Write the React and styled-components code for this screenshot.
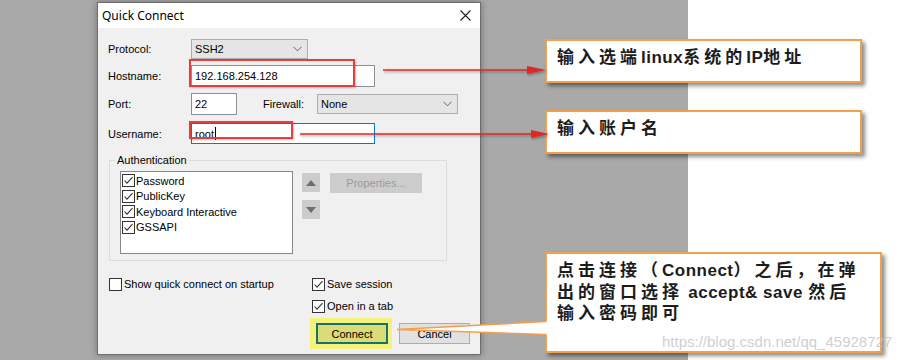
import React from "react";
import styled, { createGlobalStyle } from "styled-components";

const GlobalStyle = createGlobalStyle`
  html, body {
    margin: 0;
    padding: 0;
  }
  body {
    width: 915px;
    height: 360px;
    overflow: hidden;
    background: #fff;
  }
`;

const uiFont = `"Liberation Sans", "Noto Sans", sans-serif`;
const noteFont = `"Liberation Sans", "Noto Sans CJK SC", sans-serif`;

const Page = styled.div`
  position: relative;
  display: flex;
  width: 915px;
  height: 360px;
  overflow: hidden;
`;

const Backdrop = styled.div`
  width: 688px;
  height: 100%;
  box-sizing: border-box;
  padding: 2px 0 0 97px;
  background: #a9a9a9;
`;

const Blank = styled.div`
  flex: 1;
  background: #fff;
`;

const Dialog = styled.div`
  width: 384px;
  height: 353px;
  box-sizing: border-box;
  border: 1px solid #6e6e6e;
  background: #f0f0f0;
  box-shadow: 0 0 7px rgba(0, 0, 0, 0.35);
  font-family: ${uiFont};
  font-size: 11px;
  color: #000;
  display: flex;
  flex-direction: column;
`;

const TitleBar = styled.div`
  height: 25px;
  flex-shrink: 0;
  background: #fff;
  display: flex;
  align-items: center;
  justify-content: space-between;
  padding-left: 4px;
  font-family: "Noto Sans", sans-serif;
  font-size: 12px;
`;

const CloseButton = styled.div`
  width: 30px;
  height: 25px;
  display: flex;
  align-items: center;
  justify-content: center;
`;

const Body = styled.div`
  padding: 11px 0 0 10px;
  display: flex;
  flex-direction: column;
`;

const FormRow = styled.div`
  display: flex;
  align-items: center;
  height: ${(p) => p.$h}px;
  margin-top: ${(p) => p.$gap || 0}px;
`;

const FieldLabel = styled.span`
  width: ${(p) => p.$w || 83}px;
  margin-left: ${(p) => p.$ml || 0}px;
  flex-shrink: 0;
`;

const TextInput = styled.div`
  width: ${(p) => p.$w}px;
  height: 100%;
  box-sizing: border-box;
  border: 1px solid ${(p) => (p.$focused ? "#0078d7" : "#8f8f8f")};
  background: #fff;
  display: flex;
  align-items: center;
  padding-left: 3px;
`;

const Caret = styled.span`
  display: inline-block;
  width: 1px;
  height: 13px;
  background: #000;
  margin-left: 1px;
`;

const Select = styled.div`
  width: ${(p) => p.$w}px;
  height: 20px;
  box-sizing: border-box;
  border: 1px solid #adadad;
  background: #e5e5e5;
  display: flex;
  align-items: center;
  justify-content: space-between;
  padding: 0 5px 0 3px;
`;

const Group = styled.fieldset`
  margin: 9px 0 0 1px;
  width: 338px;
  box-sizing: border-box;
  border: 1px solid #dcdcdc;
  padding: 4px 0 6px 0;
  min-width: 0;
  display: flex;
  align-items: flex-start;
`;

const GroupTitle = styled.legend`
  padding: 0 2px;
  margin-left: 5px;
  line-height: 14px;
`;

const MethodList = styled.div`
  margin-left: 10px;
  width: 173px;
  height: 83px;
  box-sizing: border-box;
  border: 1px solid #828790;
  background: #fff;
  padding: 1px 0 0 1px;
`;

const CheckRow = styled.div`
  display: flex;
  align-items: center;
  gap: ${(p) => p.$gap || 2}px;
  height: ${(p) => p.$h || 14}px;
  margin-top: ${(p) => p.$mt || 0}px;
  padding-left: ${(p) => p.$pl || 0}px;
  white-space: nowrap;
`;

const OrderButtons = styled.div`
  margin-left: 9px;
  margin-top: 2px;
  display: flex;
  flex-direction: column;
  gap: 8px;
`;

const OrderButton = styled.div`
  width: 18px;
  height: 19px;
  background: #cccccc;
  display: flex;
  align-items: center;
  justify-content: center;
`;

const PropertiesButton = styled.div`
  margin: 2px 0 0 10px;
  width: 92px;
  height: 20px;
  background: #cccccc;
  color: #9a9a9a;
  display: flex;
  align-items: center;
  justify-content: center;
`;

const BottomArea = styled.div`
  display: flex;
  margin: 16px 0 0 1px;
`;

const LeftColumn = styled.div`
  width: 201px;
`;

const RightColumn = styled.div`
  display: flex;
  flex-direction: column;
`;

const ButtonRow = styled.div`
  display: flex;
  align-items: center;
  margin-top: 5px;
`;

const Highlight = styled.div`
  padding: 5px 4px 5px 6px;
  background: #f2f27c;
`;

const DialogButton = styled.div`
  width: ${(p) => p.$w}px;
  height: 21px;
  box-sizing: border-box;
  margin-left: ${(p) => p.$ml || 0}px;
  display: flex;
  align-items: center;
  justify-content: center;
  border: ${(p) => (p.$primary ? "2px solid #16706c" : "1px solid #adadad")};
  background: ${(p) => (p.$primary ? "#dcdc76" : "#e1e1e1")};
`;

const RedMark = styled.div`
  position: absolute;
  left: ${(p) => p.$x}px;
  top: ${(p) => p.$y}px;
  width: ${(p) => p.$w}px;
  height: ${(p) => p.$h}px;
  box-sizing: border-box;
  border: 2px solid #e2403f;
  box-shadow: 1px 1px 2px rgba(0, 0, 0, 0.25);
`;

const Callout = styled.div`
  position: absolute;
  left: ${(p) => p.$x}px;
  top: ${(p) => p.$y}px;
  width: ${(p) => p.$w}px;
  height: ${(p) => p.$h}px;
  box-sizing: border-box;
  border: 2px solid #f3a04a;
  background: #fff;
  box-shadow: 3px 3px 4px rgba(0, 0, 0, 0.45);
  padding: 6px 0 0 10px;
  font-family: ${noteFont};
  font-size: 17px;
  font-weight: 700;
  line-height: 21.5px;
  letter-spacing: 4px;
  color: #1c1c1c;
`;

const Latin = styled.span`
  letter-spacing: 0.5px;
`;

const Overlay = styled.svg`
  position: absolute;
  left: 0;
  top: 0;
  pointer-events: none;
`;

const Watermark = styled.div`
  position: absolute;
  left: 662px;
  top: 333px;
  font-family: "Liberation Sans", sans-serif;
  font-size: 15px;
  color: rgba(190, 190, 190, 0.75);
  white-space: nowrap;
`;

function CheckBox({ checked }) {
  return (
    <svg width="13" height="13" viewBox="0 0 13 13">
      <rect x="0.5" y="0.5" width="12" height="12" fill="#fff" stroke="#333" />
      {checked && (
        <polyline
          points="2.5,6.5 5,9.2 10.5,3.2"
          fill="none"
          stroke="#333"
          strokeWidth="1.1"
        />
      )}
    </svg>
  );
}

function Chevron() {
  return (
    <svg width="9" height="6" viewBox="0 0 9 6">
      <polyline points="0.5,0.8 4.5,4.8 8.5,0.8" fill="none" stroke="#555" strokeWidth="0.9" />
    </svg>
  );
}

const methods = ["Password", "PublicKey", "Keyboard Interactive", "GSSAPI"];

export default function App() {
  return (
    <>
      <GlobalStyle />
      <Page>
        <Backdrop>
          <Dialog>
            <TitleBar>
              <span>Quick Connect</span>
              <CloseButton>
                <svg width="11" height="11" viewBox="0 0 11 11">
                  <path d="M0.5 0.5 L10.5 10.5 M10.5 0.5 L0.5 10.5" stroke="#222" strokeWidth="1.1" />
                </svg>
              </CloseButton>
            </TitleBar>
            <Body>
              <FormRow $h={20}>
                <FieldLabel>Protocol:</FieldLabel>
                <Select $w={117}>
                  <span>SSH2</span>
                  <Chevron />
                </Select>
              </FormRow>
              <FormRow $h={22} $gap={6}>
                <FieldLabel>Hostname:</FieldLabel>
                <TextInput $w={184}>192.168.254.128</TextInput>
              </FormRow>
              <FormRow $h={22} $gap={6}>
                <FieldLabel>Port:</FieldLabel>
                <TextInput $w={46}>22</TextInput>
                <FieldLabel $w={54} $ml={26}>Firewall:</FieldLabel>
                <Select $w={141}>
                  <span>None</span>
                  <Chevron />
                </Select>
              </FormRow>
              <FormRow $h={21} $gap={8}>
                <FieldLabel>Username:</FieldLabel>
                <TextInput $w={184} $focused>
                  root
                  <Caret />
                </TextInput>
              </FormRow>

              <Group>
                <GroupTitle>Authentication</GroupTitle>
                <MethodList>
                  {methods.map((m) => (
                    <CheckRow key={m} $h={15.5} $gap={1}>
                      <CheckBox checked />
                      <span>{m}</span>
                    </CheckRow>
                  ))}
                </MethodList>
                <OrderButtons>
                  <OrderButton>
                    <svg width="10" height="6" viewBox="0 0 10 6">
                      <polygon points="5,0 10,6 0,6" fill="#6e6e6e" />
                    </svg>
                  </OrderButton>
                  <OrderButton>
                    <svg width="10" height="6" viewBox="0 0 10 6">
                      <polygon points="0,0 10,0 5,6" fill="#6e6e6e" />
                    </svg>
                  </OrderButton>
                </OrderButtons>
                <PropertiesButton>Properties...</PropertiesButton>
              </Group>

              <BottomArea>
                <LeftColumn>
                  <CheckRow>
                    <CheckBox />
                    <span>Show quick connect on startup</span>
                  </CheckRow>
                </LeftColumn>
                <RightColumn>
                  <CheckRow $pl={2}>
                    <CheckBox checked />
                    <span>Save session</span>
                  </CheckRow>
                  <CheckRow $pl={2} $mt={8}>
                    <CheckBox checked />
                    <span>Open in a tab</span>
                  </CheckRow>
                  <ButtonRow>
                    <Highlight>
                      <DialogButton $w={72} $primary>
                        Connect
                      </DialogButton>
                    </Highlight>
                    <DialogButton $w={71} $ml={7}>
                      Cancel
                    </DialogButton>
                  </ButtonRow>
                </RightColumn>
              </BottomArea>
            </Body>
          </Dialog>
        </Backdrop>
        <Blank />

        <RedMark $x={189} $y={59} $w={166} $h={28} />
        <RedMark $x={189} $y={121} $w={104} $h={18} />

        <Callout $x={545} $y={39} $w={317} $h={44}>
          输入选端<Latin>linux</Latin>系统的<Latin>IP</Latin>地址
        </Callout>
        <Callout $x={545} $y={110} $w={317} $h={44}>
          输入账户名
        </Callout>
        <Callout $x={545} $y={252} $w={337} $h={101}>
          点击连接（<Latin>Connect</Latin>）之后，在弹
          <br />
          出的窗口选择<Latin> accept&amp; save </Latin>然后
          <br />
          输入密码即可
        </Callout>

        <Overlay width="915" height="360" viewBox="0 0 915 360">
          <defs>
            <filter id="arrowShadow" x="-5%" y="-50%" width="110%" height="200%">
              <feDropShadow dx="1" dy="1.5" stdDeviation="1" floodOpacity="0.35" />
            </filter>
          </defs>
          <g filter="url(#arrowShadow)" fill="#e02828" stroke="#e02828">
            <line x1="383" y1="70" x2="530" y2="70" strokeWidth="1.3" />
            <polygon points="527,66 546,70 527,74" stroke="none" />
            <line x1="300" y1="134" x2="534" y2="134" strokeWidth="1.3" />
            <polygon points="531,130 549,134 531,138" stroke="none" />
          </g>
          <polygon points="397,329.5 548,321.5 548,334.5" fill="#fff" />
          <polyline
            points="546,321.5 397,329.5 546,334.5"
            fill="none"
            stroke="#f3a04a"
            strokeWidth="1.6"
          />
        </Overlay>

        <Watermark>https://blog.csdn.net/qq_45928727</Watermark>
      </Page>
    </>
  );
}
